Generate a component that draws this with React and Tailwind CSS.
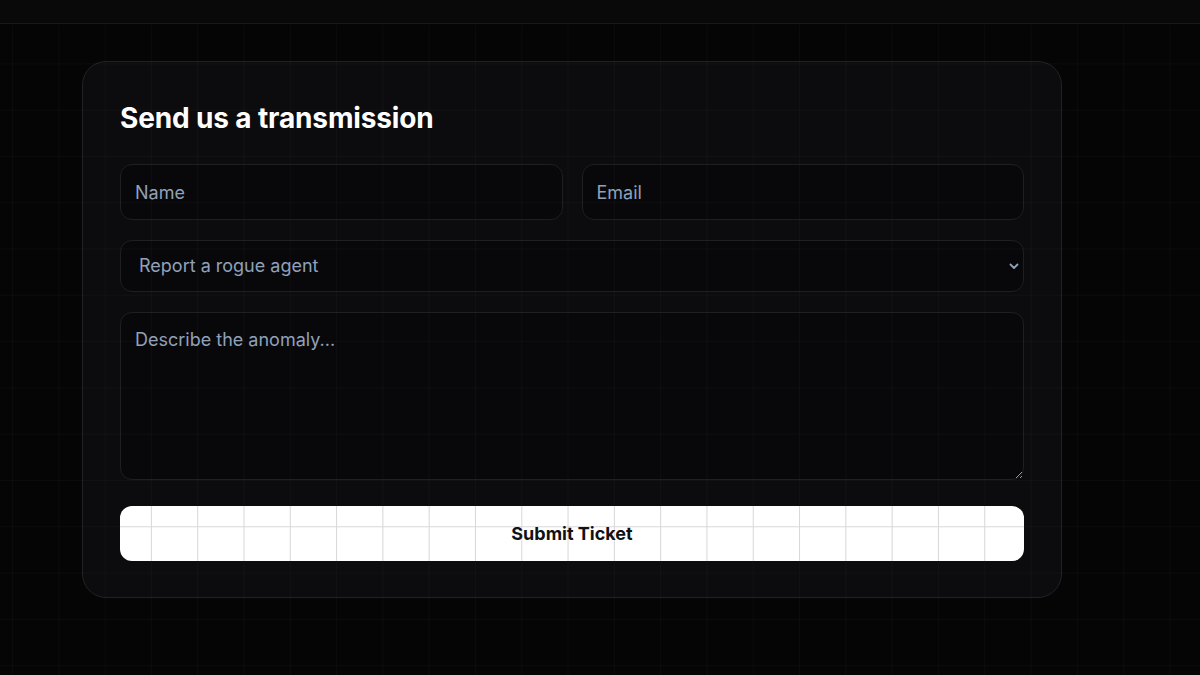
import { useState } from "react";

export default function App() {
  const [topic, setTopic] = useState("rogue");

  return (
    <div
      className="relative min-h-[675px] w-full overflow-hidden bg-[#050505] text-white"
      style={{ fontFamily: "Inter, 'Noto Sans', sans-serif" }}
    >
      {/* Top strip */}
      <div className="h-[24px] border-b border-[#191919] bg-[#090909]" />

      {/* Form card */}
      <div className="pl-[82px] pt-[37px]">
        <div className="w-[980px] rounded-3xl border border-[#222226] bg-[#0c0c0f] px-[37px] pt-[38px] pb-[36px]">
          <h2 className="text-[28px] font-bold leading-[36px] tracking-[-0.005em] text-white">
            Send us a transmission
          </h2>

          <form className="mt-[28px] flex flex-col" onSubmit={(e) => e.preventDefault()}>
            <div className="grid grid-cols-2 gap-[19px]">
              <input
                type="text"
                placeholder="Name"
                className="h-[56px] rounded-xl border border-[#1f1f23] bg-[#08080a] px-[14px] text-lg text-slate-300 outline-none placeholder:text-slate-400"
              />
              <input
                type="email"
                placeholder="Email"
                className="h-[56px] rounded-xl border border-[#1f1f23] bg-[#08080a] px-[14px] text-lg text-slate-300 outline-none placeholder:text-slate-400"
              />
            </div>

            <div className="relative mt-5">
              <select
                value={topic}
                onChange={(e) => setTopic(e.target.value)}
                className="h-[52px] w-full appearance-none rounded-xl border border-[#1f1f23] bg-[#08080a] px-[18px] text-lg text-slate-400 outline-none"
              >
                <option value="rogue">Report a rogue agent</option>
                <option value="bug">Report a bug</option>
                <option value="other">Something else</option>
              </select>
              <svg
                className="pointer-events-none absolute right-[5px] top-1/2 h-[10px] w-[10px] -translate-y-1/2 text-slate-400"
                viewBox="0 0 10 10"
                fill="none"
                stroke="currentColor"
                strokeWidth="1.8"
                strokeLinecap="round"
                strokeLinejoin="round"
              >
                <path d="M1.5 3.5 5 7l3.5-3.5" />
              </svg>
            </div>

            <textarea
              placeholder="Describe the anomaly..."
              className="mt-5 block h-[168px] w-full rounded-xl border border-[#1f1f23] bg-[#08080a] px-[14px] py-[13px] text-lg text-slate-300 outline-none placeholder:text-slate-400"
            />

            <button
              type="submit"
              className="mt-[26px] h-[55px] w-full rounded-xl bg-white bg-fixed bg-[linear-gradient(to_right,#d6d6d6_1px,transparent_1px),linear-gradient(to_bottom,#d6d6d6_1px,transparent_1px)] bg-[size:46.3px_46.3px] bg-[position:12px_17px] text-lg font-bold text-[#111]"
            >
              Submit Ticket
            </button>
          </form>
        </div>
      </div>

      {/* Faint grid overlay */}
      <div className="pointer-events-none absolute inset-x-0 top-[25px] bottom-0 bg-fixed bg-[linear-gradient(to_right,rgba(255,255,255,0.025)_1px,transparent_1px),linear-gradient(to_bottom,rgba(255,255,255,0.025)_1px,transparent_1px)] bg-[size:46.3px_46.3px] bg-[position:12px_17px]" />
    </div>
  );
}
